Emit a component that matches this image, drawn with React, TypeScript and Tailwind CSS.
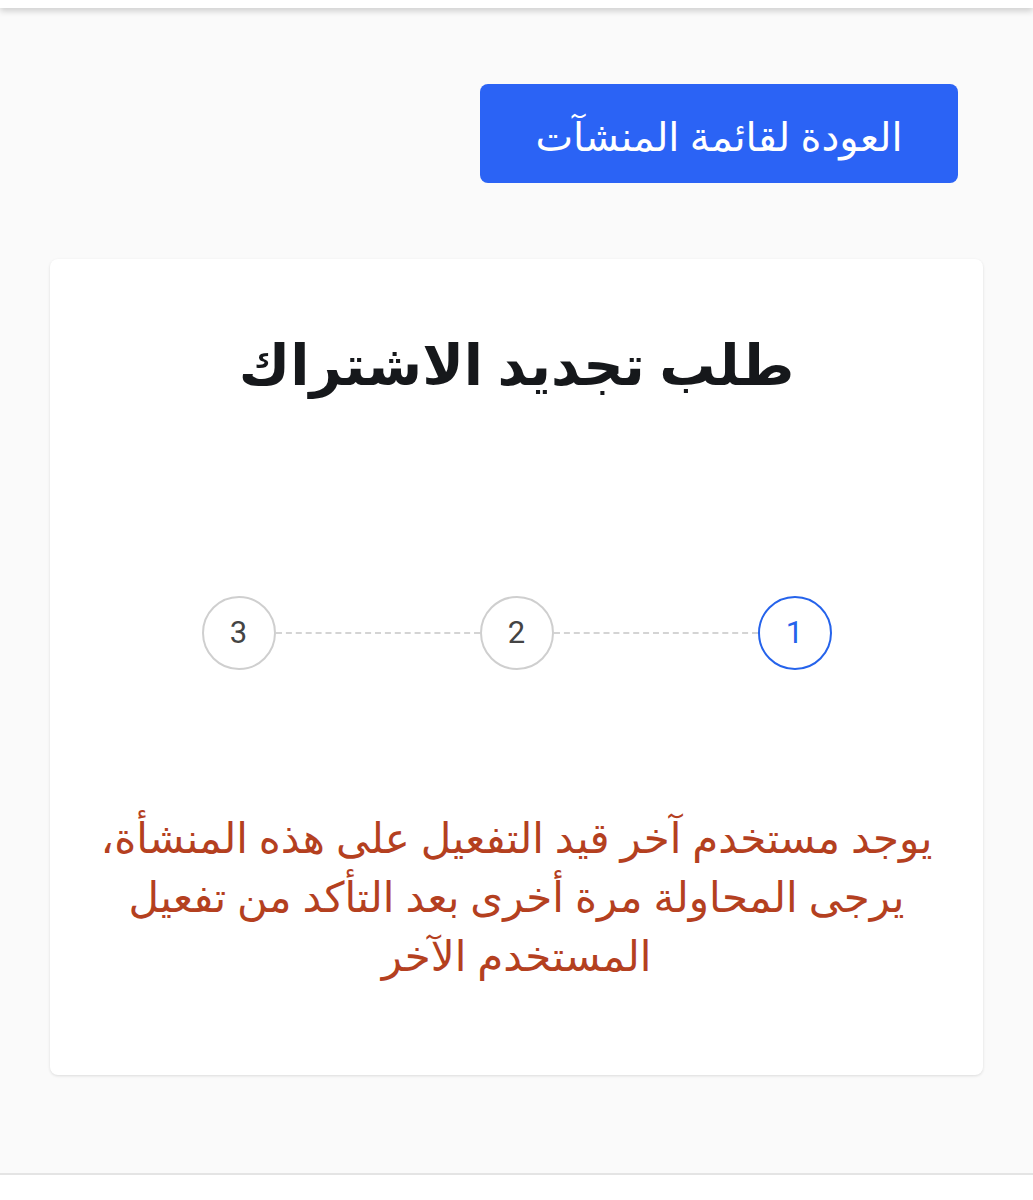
import React from 'react';

const steps = [1, 2, 3];

function Stepper() {
  return (
    <div className="flex items-center justify-center" dir="rtl">
      {steps.map((n, i) => (
        <React.Fragment key={n}>
          <div
            className={`flex h-[74px] w-[74px] shrink-0 items-center justify-center rounded-full border-2 text-[31px] ${
              n === 1 ? 'border-[#2563eb] text-[#2563eb]' : 'border-[#cfcfcf] text-[#444]'
            }`}
            style={{ fontFamily: 'Roboto, sans-serif' }}
          >
            {n}
          </div>
          {i < steps.length - 1 && (
            <div className="h-0 w-[204px] border-t-2 border-dashed border-[#d4d4d4]" />
          )}
        </React.Fragment>
      ))}
    </div>
  );
}

export default function App() {
  return (
    <div
      dir="rtl"
      className="min-h-[1175px] border-b-2 border-[#e4e4e4] bg-[#fafafa]"
      style={{ fontFamily: '"Noto Sans", "DejaVu Sans", sans-serif' }}
    >
      <div className="h-2 bg-white shadow-[0_3px_6px_rgba(0,0,0,0.18)]" />

      <div className="px-[50px] pt-[76px]">
        <div className="flex pr-[25px]">
          <button className="flex h-[99px] w-[478px] items-center justify-center rounded-lg bg-[#2b63f5] pt-1 text-[40px] text-white">
            العودة لقائمة المنشآت
          </button>
        </div>

        <div className="mt-[76px] flex h-[816px] flex-col items-center rounded-lg bg-white px-[30px] pt-[64px] shadow-[0_1px_3px_rgba(0,0,0,0.12)]">
          <h1 className="text-[56px] font-bold leading-[80px] text-[#16181b]">طلب تجديد الاشتراك</h1>

          <div className="mt-[193px]">
            <Stepper />
          </div>

          <p className="mt-[137px] text-center text-[42px] leading-[59px] text-[#b4401f]">
            يوجد مستخدم آخر قيد التفعيل على هذه المنشأة،
            <br />
            يرجى المحاولة مرة أخرى بعد التأكد من تفعيل
            <br />
            المستخدم الآخر
          </p>
        </div>
      </div>
    </div>
  );
}
